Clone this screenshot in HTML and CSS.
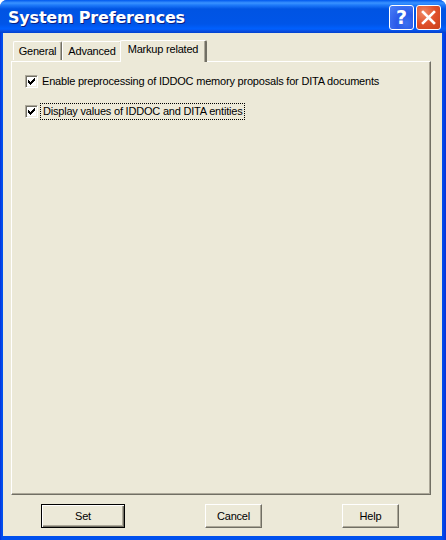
FILE: index.html
```html
<!DOCTYPE html>
<html>
<head>
<meta charset="utf-8">
<link rel="stylesheet" href="styles.css">
</head>
<body>
<div class="window">
  <div class="titlebar">
    <div class="title">System Preferences</div>
    <div class="tbtns">
      <div class="tbtn help"><span>?</span></div>
      <div class="tbtn close">
        <svg width="25" height="25" viewBox="0 0 25 25"><path d="M7 7 L18 18 M18 7 L7 18" stroke="#fff" stroke-width="2.6" stroke-linecap="square"/></svg>
      </div>
    </div>
  </div>
  <div class="client">
    <div class="tabs">
      <div class="tab first">General</div>
      <div class="tab second">Advanced</div>
      <div class="tab sel">Markup related</div>
    </div>
    <div class="pane">
      <div class="row">
        <span class="cb"><svg width="7" height="7" viewBox="0 0 7 7" shape-rendering="crispEdges"><path d="M6 0h1v3h-1z M5 1h1v3h-1z M4 2h1v3h-1z M3 3h1v3h-1z M2 4h1v3h-1z M1 3h1v3h-1z M0 2h1v3h-1z" fill="#000"/></svg></span>
        <span class="lbl">Enable preprocessing of IDDOC memory proposals for DITA documents</span>
      </div>
      <div class="row">
        <span class="cb"><svg width="7" height="7" viewBox="0 0 7 7" shape-rendering="crispEdges"><path d="M6 0h1v3h-1z M5 1h1v3h-1z M4 2h1v3h-1z M3 3h1v3h-1z M2 4h1v3h-1z M1 3h1v3h-1z M0 2h1v3h-1z" fill="#000"/></svg></span>
        <span class="lbl focus">Display values of IDDOC and DITA entities</span>
      </div>
    </div>
    <div class="buttons">
      <div class="btn def"><span>Set</span></div>
      <div class="btn"><span>Cancel</span></div>
      <div class="btn"><span>Help</span></div>
    </div>
  </div>
</div>
</body>
</html>
```
FILE: styles.css
```css
html, body { margin: 0; padding: 0; }
body { width: 446px; height: 540px; overflow: hidden; font-family: "Liberation Sans", Arial, sans-serif; font-size: 11px; letter-spacing: -0.2px; color: #000; }
.window {
  width: 446px; height: 540px; box-sizing: border-box;
  display: flex; flex-direction: column;
  background: linear-gradient(90deg, #0831d9 0, #0050ee 2px, #0050ee 442px, #0831d9 446px);
  border-radius: 7px 7px 0 0;
}
.titlebar {
  height: 33px; flex: none; display: flex; align-items: center; justify-content: space-between;
  background: linear-gradient(180deg, #0058ee 0, #3a93ff 3px, #1f7bfa 5px, #0054e3 9px, #0055e8 24px, #0060ff 29px, #0a4ee0 31px, #0041d0 33px);
  border-radius: 7px 7px 0 0;
  padding: 0 5px 0 8px;
}
.title {
  color: #fff; font-family: "DejaVu Sans", sans-serif; font-weight: bold; font-size: 16px;
  letter-spacing: -0.2px; text-shadow: 1px 1px 0 #0a1e80; margin-top: 2px;
}
.tbtns { display: flex; gap: 2px; margin-top: 1px; }
.tbtn {
  width: 23px; height: 23px; border: 1px solid #fff; border-radius: 3px;
  display: flex; align-items: center; justify-content: center; overflow: hidden;
}
.help { background: radial-gradient(circle at 70% 75%, #3c70f0 0, #2a5ae8 40%, #4b80f8 100%); }
.help span { color: #fff; font-family: "DejaVu Sans", sans-serif; font-weight: bold; font-size: 19px; line-height: 1; }
.close { background: radial-gradient(circle at 30% 30%, #f08a66 0, #e0502a 50%, #c8401c 100%); }
.close svg { display: block; flex: none; }
.client {
  flex: 1; margin: 0 4px 4px 3px; background: #ece9d8;
  display: flex; flex-direction: column; padding: 6px 11px 8px 8px;
}
.tabs { display: flex; align-items: flex-end; height: 22px; padding-left: 2px; position: relative; z-index: 1; }
.tab {
  height: 19px; box-sizing: border-box; line-height: 19px; text-align: center;
  border-top: 1px solid #fff; border-left: 1px solid #fff; border-right: 1px solid #716f64;
  box-shadow: inset -1px 0 0 #aca899;
  border-radius: 2px 2px 0 0; background: #ece9d8;
  margin-bottom: 1px;
}
.tab.first { width: 49px; }
.tab.second { width: 60px; }
.tab.sel {
  width: 87px; height: 22px; margin: 0 0 -1px -2px; line-height: 17px;
  border-right: 2px solid #716f64; box-shadow: inset -1px 0 0 #aca899;
}
.pane {
  flex: 1; box-sizing: border-box;
  border-top: 1px solid #fff; border-left: 1px solid #fff;
  border-right: 1px solid #716f64; border-bottom: 1px solid #716f64;
  box-shadow: inset -1px -1px 0 #aca899;
  padding: 13px 0 0 13px;
  display: flex; flex-direction: column; gap: 17px;
}
.row { display: flex; align-items: center; height: 13px; }
.cb {
  width: 13px; height: 13px; box-sizing: border-box; background: #fff; flex: none;
  border-top: 1px solid #aca899; border-left: 1px solid #aca899;
  border-right: 1px solid #fff; border-bottom: 1px solid #fff;
  box-shadow: inset 1px 1px 0 #716f64, inset -1px -1px 0 #f1efe2;
  display: flex; align-items: center; justify-content: center;
}
.cb svg { display: block; }
.lbl { margin-left: 4px; white-space: nowrap; line-height: 13px; }
.lbl.focus { outline: 1px dotted #000; outline-offset: 1px; margin-left: 4px; padding: 0 1px; }
.buttons { display: flex; gap: 80px; padding: 9px 0 0 30px; }
.btn {
  width: 57px; height: 24px; box-sizing: border-box;
  border-top: 1px solid #fff; border-left: 1px solid #fff;
  border-right: 1px solid #716f64; border-bottom: 1px solid #716f64;
  box-shadow: inset -1px -1px 0 #aca899;
  display: flex; align-items: center; justify-content: center; background: #ece9d8;
}
.btn.def {
  width: 84px; border: 1px solid #000;
  box-shadow: inset 1px 1px 0 #fff, inset -1px -1px 0 #716f64, inset -2px -2px 0 #aca899;
}
.btn span { margin-top: -1px; }
```
